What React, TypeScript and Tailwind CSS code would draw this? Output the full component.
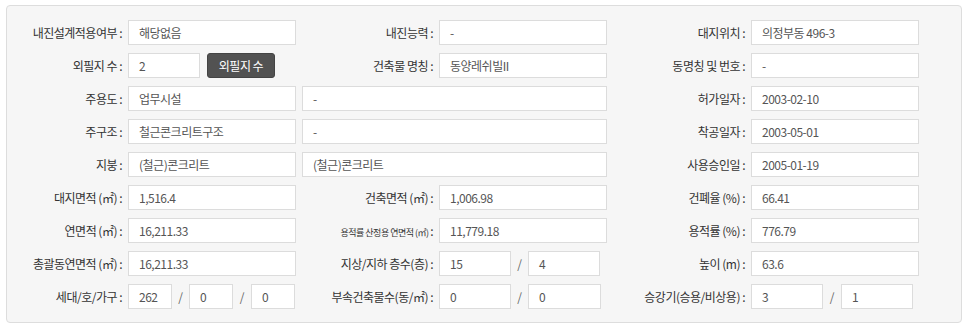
import React from "react";

const font = { fontFamily: '"Noto Sans CJK KR", "Noto Sans", sans-serif' };

function Label({ w, children, small }: { w: string; children: React.ReactNode; small?: boolean }) {
  return (
    <div className={`${w} shrink-0 text-right whitespace-nowrap text-[#333] ${small ? "text-[9px]" : "text-[12px]"} tracking-[-0.5px]`}>
      {children}
    </div>
  );
}

function Box({ w, value }: { w: string; value?: string }) {
  return (
    <div className={`${w} h-[25px] shrink-0 bg-white border border-[#dcdcdc] flex items-center pl-[10px] text-[12px] text-[#555] tracking-[-0.5px] whitespace-nowrap overflow-hidden`}>
      {value}
    </div>
  );
}

function Slash({ w }: { w: string }) {
  return <div className={`${w} shrink-0 text-center text-[12px] text-[#666]`}>/</div>;
}

export default function App() {
  return (
    <div className="w-[966px] h-[326px] bg-white pt-[5px] pl-[6px]" style={font}>
      <div className="w-[956px] h-[318px] bg-[#f6f6f6] border border-[#dddddd] rounded-[4px] pt-[14px] flex flex-col gap-[8px]">
        {/* Row 1 */}
        <div className="flex items-center gap-[6px] h-[25px]">
          <Label w="w-[115px]">내진설계적용여부 :</Label>
          <Box w="w-[168px]" value="해당없음" />
          <Label w="w-[131px]">내진능력 :</Label>
          <Box w="w-[168px]" value="-" />
          <Label w="w-[132px]">대지위치 :</Label>
          <Box w="w-[168px]" value="의정부동 496-3" />
        </div>
        {/* Row 2 */}
        <div className="flex items-center gap-[6px] h-[25px]">
          <Label w="w-[115px]">외필지 수 :</Label>
          <div className="w-[168px] shrink-0 flex items-center gap-[7px]">
            <Box w="w-[72px]" value="2" />
            <button className="w-[68px] h-[25px] bg-[#525252] border border-[#444] rounded-[3px] text-white text-[12px] tracking-[-0.5px]">
              외필지 수
            </button>
          </div>
          <Label w="w-[131px]">건축물 명칭 :</Label>
          <Box w="w-[168px]" value="동양레쉬빌II" />
          <Label w="w-[132px]">동명칭 및 번호 :</Label>
          <Box w="w-[168px]" value="-" />
        </div>
        {/* Row 3 */}
        <div className="flex items-center gap-[6px] h-[25px]">
          <Label w="w-[115px]">주용도 :</Label>
          <Box w="w-[168px]" value="업무시설" />
          <Box w="w-[305px]" value="-" />
          <Label w="w-[132px]">허가일자 :</Label>
          <Box w="w-[168px]" value="2003-02-10" />
        </div>
        {/* Row 4 */}
        <div className="flex items-center gap-[6px] h-[25px]">
          <Label w="w-[115px]">주구조 :</Label>
          <Box w="w-[168px]" value="철근콘크리트구조" />
          <Box w="w-[305px]" value="-" />
          <Label w="w-[132px]">착공일자 :</Label>
          <Box w="w-[168px]" value="2003-05-01" />
        </div>
        {/* Row 5 */}
        <div className="flex items-center gap-[6px] h-[25px]">
          <Label w="w-[115px]">지붕 :</Label>
          <Box w="w-[168px]" value="(철근)콘크리트" />
          <Box w="w-[305px]" value="(철근)콘크리트" />
          <Label w="w-[132px]">사용승인일 :</Label>
          <Box w="w-[168px]" value="2005-01-19" />
        </div>
        {/* Row 6 */}
        <div className="flex items-center gap-[6px] h-[25px]">
          <Label w="w-[115px]">대지면적 (㎡) :</Label>
          <Box w="w-[168px]" value="1,516.4" />
          <Label w="w-[131px]">건축면적 (㎡) :</Label>
          <Box w="w-[168px]" value="1,006.98" />
          <Label w="w-[132px]">건폐율 (%) :</Label>
          <Box w="w-[168px]" value="66.41" />
        </div>
        {/* Row 7 */}
        <div className="flex items-center gap-[6px] h-[25px]">
          <Label w="w-[115px]">연면적 (㎡) :</Label>
          <Box w="w-[168px]" value="16,211.33" />
          <Label w="w-[131px]" small>
            용적률 산정용 연면적 (㎡) <span className="text-[12px]">:</span>
          </Label>
          <Box w="w-[168px]" value="11,779.18" />
          <Label w="w-[132px]">용적률 (%) :</Label>
          <Box w="w-[168px]" value="776.79" />
        </div>
        {/* Row 8 */}
        <div className="flex items-center gap-[6px] h-[25px]">
          <Label w="w-[115px]">총괄동연면적 (㎡) :</Label>
          <Box w="w-[168px]" value="16,211.33" />
          <Label w="w-[131px]">지상/지하 층수(층) :</Label>
          <div className="w-[168px] shrink-0 flex items-center">
            <Box w="w-[72px]" value="15" />
            <Slash w="w-[17px]" />
            <Box w="w-[72px]" value="4" />
          </div>
          <Label w="w-[132px]">높이 (m) :</Label>
          <Box w="w-[168px]" value="63.6" />
        </div>
        {/* Row 9 */}
        <div className="flex items-center gap-[6px] h-[25px]">
          <Label w="w-[115px]">세대/호/가구 :</Label>
          <div className="w-[168px] shrink-0 flex items-center">
            <Box w="w-[44px]" value="262" />
            <Slash w="w-[17px]" />
            <Box w="w-[44px]" value="0" />
            <Slash w="w-[18px]" />
            <Box w="w-[44px]" value="0" />
          </div>
          <Label w="w-[131px]">부속건축물수(동/㎡) :</Label>
          <div className="w-[168px] shrink-0 flex items-center">
            <Box w="w-[72px]" value="0" />
            <Slash w="w-[17px]" />
            <Box w="w-[73px]" value="0" />
          </div>
          <Label w="w-[132px]">승강기(승용/비상용) :</Label>
          <div className="w-[168px] shrink-0 flex items-center">
            <Box w="w-[72px]" value="3" />
            <Slash w="w-[18px]" />
            <Box w="w-[72px]" value="1" />
          </div>
        </div>
      </div>
    </div>
  );
}
